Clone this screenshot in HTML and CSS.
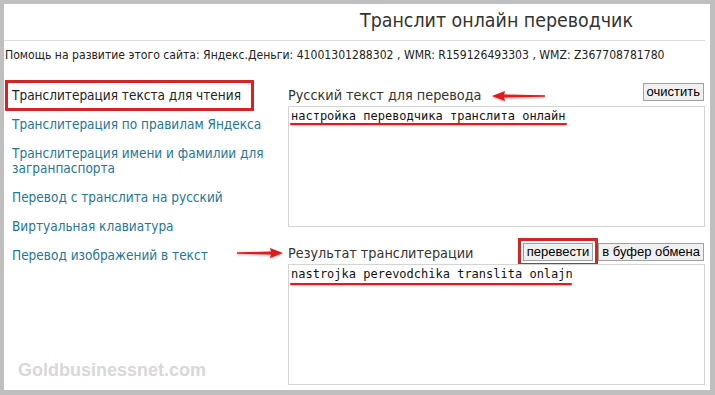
FILE: index.html
```html
<!DOCTYPE html>
<html lang="ru">
<head>
<meta charset="utf-8">
<title>Транслит онлайн переводчик</title>
<link rel="stylesheet" href="styles.css">
</head>
<body>
<div class="frame">
  <header class="header">
    <h1 class="title">Транслит онлайн переводчик</h1>
  </header>
  <p class="donate">Помощь на развитие этого сайта: Яндекс.Деньги: 41001301288302 , WMR: R159126493303 , WMZ: Z367708781780</p>
  <main class="main">
    <nav class="nav">
      <a class="nav-link is-active" href="#">Транслитерация текста для чтения</a>
      <a class="nav-link" href="#">Транслитерация по правилам Яндекса</a>
      <a class="nav-link" href="#">Транслитерация имени и фамилии для загранпаспорта</a>
      <a class="nav-link" href="#">Перевод с транслита на русский</a>
      <a class="nav-link" href="#">Виртуальная клавиатура</a>
      <a class="nav-link" href="#">Перевод изображений в текст</a>
    </nav>
    <section class="work">
      <div class="row">
        <label class="label" for="src">Русский текст для перевода</label>
        <div class="buttons"><button class="btn" type="button">очистить</button></div>
      </div>
      <textarea id="src" class="box" readonly>настройка переводчика транслита онлайн</textarea>
      <div class="row row-second">
        <label class="label" for="dst">Результат транслитерации</label>
        <div class="buttons"><button class="btn btn-marked" type="button">перевести</button><button class="btn" type="button">в буфер обмена</button></div>
      </div>
      <textarea id="dst" class="box box-second" readonly>nastrojka perevodchika translita onlajn</textarea>
    </section>
  </main>

  <span class="underline underline-1"></span>
  <span class="underline underline-2"></span>
  <svg class="arrow arrow-1" width="56" height="12" viewBox="0 0 56 12"><path d="M1 6 L14 1 L13 4.6 L54 5.3 L54 6.7 L13 7.4 L14 11 Z" fill="#e01b1b"/></svg>
  <svg class="arrow arrow-2" width="48" height="12" viewBox="0 0 48 12"><path d="M47 6 L34 1 L35 4.6 L1 5.3 L1 6.7 L35 7.4 L34 11 Z" fill="#e01b1b"/></svg>
  <span class="watermark">Goldbusinessnet.com</span>
</div>
</body>
</html>
```
FILE: styles.css
```css
html, body {
  margin: 0;
  padding: 0;
}
body {
  background: #bfbfbf;
  overflow: hidden;
  font-family: "DejaVu Sans", "Liberation Sans", sans-serif;
  font-stretch: condensed;
}
.frame {
  position: relative;
  margin: 4px 0 0 4px;
  width: 706px;
  height: 386px;
  background: #fff;
}
.header {
  height: 36px;
  border-bottom: 1px solid #dcdcdc;
  padding-left: 284px;
  width: 417px;
}
.title {
  margin: 0;
  font-weight: normal;
  font-size: 19.4px;
  line-height: 34px;
  color: #333;
  text-align: center;
}
.donate {
  margin: 6px 0 0 1px;
  font-size: 12.1px;
  line-height: 16px;
  color: #222;
  white-space: nowrap;
}
.main {
  display: grid;
  grid-template-columns: 284px 417px;
}
.nav {
  display: flex;
  flex-direction: column;
  align-items: flex-start;
  gap: 14px;
  padding: 25px 0 0 8px;
}
.nav-link {
  font-size: 13.5px;
  line-height: 15px;
  color: #24759a;
  text-decoration: none;
  width: 262px;
}
.nav-link.is-active {
  color: #222;
  width: auto;
  outline: 3px solid #d42424;
  outline-offset: 3px;
  padding: 2px 7px 2px 1px;
  margin: -2px 0 -2px -1px;
}
.work {
  display: flex;
  flex-direction: column;
  padding-top: 20px;
}
.row {
  display: flex;
  justify-content: space-between;
  align-items: flex-start;
  height: 20px;
  margin-bottom: 3px;
}
.row-second {
  margin-top: 16px;
  height: 18px;
}
.label {
  font-size: 14.3px;
  line-height: 18px;
  padding-top: 3px;
  color: #333;
}
.row-second .label {
  padding-top: 1px;
}
.buttons {
  display: flex;
  gap: 5px;
  padding-right: 1px;
}
.btn {
  font-family: "Liberation Sans", Arial, sans-serif;
  font-size: 13px;
  height: 18px;
  line-height: 16px;
  padding: 0 3px;
  margin: 0;
  background: #f0f0f0;
  border: 1px solid #a0a0a0;
  border-radius: 0;
  color: #000;
}
.btn-marked {
  outline: 3px solid #d42424;
  outline-offset: 2px;
}
.box {
  box-sizing: border-box;
  width: 417px;
  height: 121px;
  margin: 0;
  border: 1px solid #d4d4d4;
  padding: 2px 2px;
  font-family: "DejaVu Sans Mono", "Liberation Mono", monospace;
  font-size: 12px;
  line-height: 14px;
  color: #111;
  resize: none;
  background: #fff;
  outline: none;
}
.underline {
  position: absolute;
  height: 2px;
  background: #e01b1b;
  box-shadow: 0 1px 2px rgba(0,0,0,0.25);
  border-radius: 1px;
}
.underline-1 { left: 286px; top: 119px; width: 277px; }
.underline-2 { left: 286px; top: 279px; width: 282px; }
.arrow {
  position: absolute;
  filter: drop-shadow(0 1px 1px rgba(0,0,0,0.35));
}
.arrow-1 { left: 487px; top: 86px; }
.arrow-2 { left: 232px; top: 243px; }
.watermark {
  position: absolute;
  left: 14px;
  top: 355px;
  font-family: "Liberation Sans", Arial, sans-serif;
  font-weight: bold;
  font-size: 18px;
  line-height: 22px;
  color: #d8d8d8;
}
```
